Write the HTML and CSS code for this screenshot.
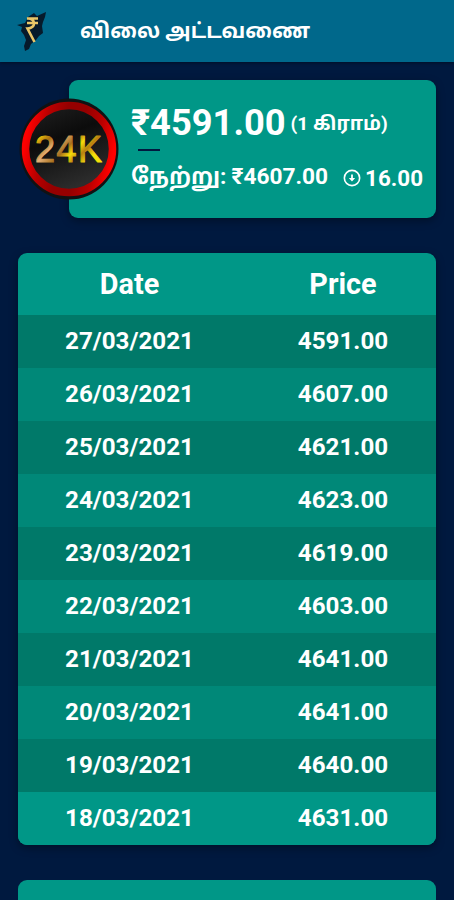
FILE: index.html
```html
<!DOCTYPE html>
<html lang="ta">
<head>
    <meta charset="UTF-8">
    <meta name="viewport" content="width=device-width, initial-scale=1.0">
    <title>விலை அட்டவணை</title>
    <link rel="stylesheet" href="styles.css">
</head>
<body>
    <header class="header">
        <svg class="logo" viewBox="0 0 30 40" width="30" height="40">
            <path d="M29 1 L28 6 L26 11 L25 15 L26 22 L22 25 L19 29 L14 33 L12 38 L8 40 L7 35 L9 29 L7 24 L4 20 L5 16 L0 14 L8 12 L11 6 L17 2 L20 5 Z" fill="#061a2b"/>
            <path d="M10 7.500 H21 M10 12 H21 M10 7.500 C19 6.500 19.500 17.500 10.500 17.500 L17.500 31" fill="none" stroke="#e9c668" stroke-width="2.600"/>
        </svg>
        <h1 class="title">விலை அட்டவணை</h1>
    </header>

    <main class="container">
        <section class="rate-card">
            <svg class="badge" viewBox="0 0 100 102" width="100" height="102">
                <defs>
                    <linearGradient id="ring" x1="0" y1="0.400" x2="1" y2="0.600">
                        <stop offset="0" stop-color="#ff0000"/>
                        <stop offset="0.200" stop-color="#b80000"/>
                        <stop offset="0.400" stop-color="#960000"/>
                        <stop offset="0.600" stop-color="#960000"/>
                        <stop offset="0.800" stop-color="#b80000"/>
                        <stop offset="1" stop-color="#ff0000"/>
                    </linearGradient>
                    <linearGradient id="face" x1="0" y1="0" x2="0.400" y2="1">
                        <stop offset="0" stop-color="#222"/>
                        <stop offset="0.450" stop-color="#0c0c0c"/>
                        <stop offset="1" stop-color="#2c2c2c"/>
                    </linearGradient>
                    <linearGradient id="gold" x1="0" y1="0" x2="1" y2="0.600">
                        <stop offset="0" stop-color="#f5d80a"/>
                        <stop offset="0.120" stop-color="#f0c60a"/>
                        <stop offset="0.260" stop-color="#a96f12"/>
                        <stop offset="0.380" stop-color="#e3b078"/>
                        <stop offset="0.550" stop-color="#a8701c"/>
                        <stop offset="0.660" stop-color="#f7dc08"/>
                        <stop offset="0.780" stop-color="#b88010"/>
                        <stop offset="0.920" stop-color="#f5e00a"/>
                    </linearGradient>
                </defs>
                <ellipse cx="50" cy="51" rx="49.500" ry="50.500" fill="#101214"/>
                <circle cx="50" cy="51" r="43.500" fill="url(#face)" stroke="url(#ring)" stroke-width="7.500"/>
                <text class="karat" x="16" y="64" textLength="67" lengthAdjust="spacing" fill="url(#gold)" stroke="url(#gold)" stroke-width="1.100" stroke-linejoin="round">24K</text>
            </svg>
            <div class="rate-body">
                <div class="today"><span class="price">₹4591.00</span><span class="unit">(1 கிராம்)</span></div>
                <div class="line"></div>
                <div class="yesterday">
                    <span class="label">நேற்று:</span>
                    <span class="old-price">₹4607.00</span>
                    <svg class="down" viewBox="0 0 20 20" width="18" height="18">
                        <circle cx="10" cy="10" r="8.500" fill="none" stroke="#fff" stroke-width="1.800"/>
                        <path d="M9 6 H11 V10 H13.500 L10 13.800 L6.500 10 H9 Z" fill="#fff"/>
                    </svg>
                    <span class="change">16.00</span>
                </div>
            </div>
        </section>

        <table class="price-table">
            <thead>
                <tr><th>Date</th><th>Price</th></tr>
            </thead>
            <tbody>
                <tr><td>27/03/2021</td><td>4591.00</td></tr>
                <tr><td>26/03/2021</td><td>4607.00</td></tr>
                <tr><td>25/03/2021</td><td>4621.00</td></tr>
                <tr><td>24/03/2021</td><td>4623.00</td></tr>
                <tr><td>23/03/2021</td><td>4619.00</td></tr>
                <tr><td>22/03/2021</td><td>4603.00</td></tr>
                <tr><td>21/03/2021</td><td>4641.00</td></tr>
                <tr><td>20/03/2021</td><td>4641.00</td></tr>
                <tr><td>19/03/2021</td><td>4640.00</td></tr>
                <tr><td>18/03/2021</td><td>4631.00</td></tr>
            </tbody>
        </table>

        <section class="next-card"></section>
    </main>
</body>
</html>
```
FILE: styles.css
```css
* {
    box-sizing: border-box;
}
body {
    margin: 0;
    height: 900px;
    overflow: hidden;
    background-color: #00193f;
    color: #fff;
    font-family: Roboto, "Noto Sans Tamil", "Noto Sans", sans-serif;
    font-weight: 700;
}
.header {
    display: flex;
    align-items: center;
    height: 62px;
    padding-left: 17px;
    background-color: #00688b;
    box-shadow: 0 1px 3px rgba(0,0,0,0.4);
}
.logo {
    flex: none;
}
.title {
    margin: 0 0 0 33px;
    font-size: 20.8px;
    line-height: 30px;
    white-space: nowrap;
}
.container {
    padding: 18px 18px 0;
}
.rate-card {
    display: flex;
    align-items: center;
    height: 138px;
    margin-left: 51px;
    background-color: #009787;
    border-radius: 9px;
    box-shadow: 0 3px 8px rgba(0,0,0,0.35);
}
.badge {
    flex: none;
    margin-left: -50px;
}
.karat {
    font-family: "Liberation Sans", sans-serif;
    font-size: 36px;
    font-weight: 400;
}
.rate-body {
    margin-left: 12px;
    white-space: nowrap;
}
.today {
    display: flex;
    align-items: center;
    height: 48px;
    line-height: 48px;
}
.price {
    font-size: 36.3px;
}
.unit {
    margin: 2px 0 0 5px;
    font-size: 19.2px;
}
.line {
    width: 22px;
    height: 2px;
    margin: 2px 0 0 7px;
    background-color: #00193f;
}
.yesterday {
    display: flex;
    align-items: center;
    height: 48px;
    padding-top: 3px;
    font-size: 22.7px;
    line-height: 30px;
}
.old-price {
    margin-left: 5px;
}
.down {
    flex: none;
    margin: 2px 4px 0 15px;
}
.change {
    padding-top: 2px;
    font-size: 22.4px;
}
.price-table {
    width: 100%;
    margin-top: 35px;
    border-spacing: 0;
    table-layout: fixed;
    border-radius: 9px;
    overflow: hidden;
    background-color: #009787;
    box-shadow: 0 3px 8px rgba(0,0,0,0.35);
}
th, td {
    padding: 0;
    text-align: center;
}
th {
    height: 62px;
    padding-bottom: 1px;
    font-size: 28.8px;
}
td {
    height: 53px;
    padding-bottom: 1px;
    font-size: 24.2px;
}
th:first-child {
    width: 223px;
}
th:last-child, td:last-child {
    padding-left: 9px;
}
tbody tr:nth-child(odd) {
    background-color: #007969;
}
tbody tr:nth-child(even) {
    background-color: #008878;
}
tbody tr:last-child {
    background-color: #009787;
}
.next-card {
    height: 60px;
    margin-top: 35px;
    background-color: #009787;
    border-radius: 9px;
}
```
